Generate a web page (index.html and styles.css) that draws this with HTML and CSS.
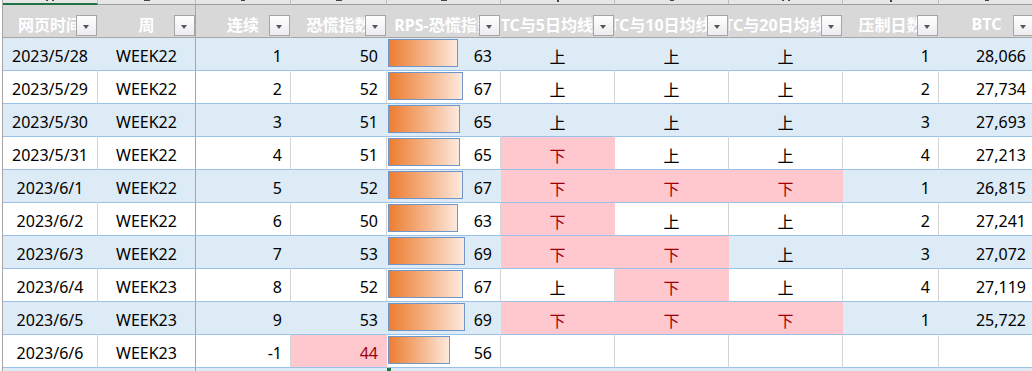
FILE: index.html
```html
<!DOCTYPE html>
<html lang="zh">
<head>
<meta charset="utf-8">
<title>Sheet</title>
<link rel="stylesheet" href="styles.css">
</head>
<body>
<div class="sheet">
  <div class="row strip">
    <div class="sc sel"><i class="mk m2"></i></div><div class="sc"><i class="mk"></i></div><div class="sc"><i class="mk m3"></i></div><div class="sc"><i class="mk"></i></div><div class="sc"><i class="mk"></i></div><div class="sc"><i class="mk m1"></i></div><div class="sc"><i class="mk m3"></i></div><div class="sc"><i class="mk m2"></i></div><div class="sc"><i class="mk m1"></i></div><div class="sc"><i class="mk m3"></i></div>
  </div>
  <div class="row head">
    <div class="hc"><span class="ht">网页时间</span><i class="fb"></i></div>
    <div class="hc frz"><span class="ht">周</span><i class="fb"></i></div>
    <div class="hc"><span class="ht">连续</span><i class="fb"></i></div>
    <div class="hc"><span class="ht">恐慌指数</span><i class="fb"></i></div>
    <div class="hc"><span class="ht">RPS-恐慌指数</span><i class="fb"></i></div>
    <div class="hc"><span class="ht">BTC与5日均线比较</span><i class="fb"></i></div>
    <div class="hc"><span class="ht">BTC与10日均线比较</span><i class="fb"></i></div>
    <div class="hc"><span class="ht">BTC与20日均线比较</span><i class="fb"></i></div>
    <div class="hc"><span class="ht">压制日数</span><i class="fb"></i></div>
    <div class="hc"><span class="ht">BTC</span><i class="fb"></i></div>
  </div>

  <div class="row band">
    <div class="c ctr">2023/5/28</div><div class="c ctr frz">WEEK22</div><div class="c num">1</div><div class="c num">50</div>
    <div class="c rps"><span class="bar" style="width:70px"></span><span class="rv">63</span></div>
    <div class="c ctr">上</div><div class="c ctr">上</div><div class="c ctr">上</div><div class="c num">1</div><div class="c num">28,066</div>
  </div>
  <div class="row">
    <div class="c ctr">2023/5/29</div><div class="c ctr frz">WEEK22</div><div class="c num">2</div><div class="c num">52</div>
    <div class="c rps"><span class="bar" style="width:75px"></span><span class="rv">67</span></div>
    <div class="c ctr">上</div><div class="c ctr">上</div><div class="c ctr">上</div><div class="c num">2</div><div class="c num">27,734</div>
  </div>
  <div class="row band">
    <div class="c ctr">2023/5/30</div><div class="c ctr frz">WEEK22</div><div class="c num">3</div><div class="c num">51</div>
    <div class="c rps"><span class="bar" style="width:72px"></span><span class="rv">65</span></div>
    <div class="c ctr">上</div><div class="c ctr">上</div><div class="c ctr">上</div><div class="c num">3</div><div class="c num">27,693</div>
  </div>
  <div class="row">
    <div class="c ctr">2023/5/31</div><div class="c ctr frz">WEEK22</div><div class="c num">4</div><div class="c num">51</div>
    <div class="c rps"><span class="bar" style="width:72px"></span><span class="rv">65</span></div>
    <div class="c ctr bad">下</div><div class="c ctr">上</div><div class="c ctr">上</div><div class="c num">4</div><div class="c num">27,213</div>
  </div>
  <div class="row band">
    <div class="c ctr">2023/6/1</div><div class="c ctr frz">WEEK22</div><div class="c num">5</div><div class="c num">52</div>
    <div class="c rps"><span class="bar" style="width:75px"></span><span class="rv">67</span></div>
    <div class="c ctr bad">下</div><div class="c ctr bad">下</div><div class="c ctr bad">下</div><div class="c num">1</div><div class="c num">26,815</div>
  </div>
  <div class="row">
    <div class="c ctr">2023/6/2</div><div class="c ctr frz">WEEK22</div><div class="c num">6</div><div class="c num">50</div>
    <div class="c rps"><span class="bar" style="width:70px"></span><span class="rv">63</span></div>
    <div class="c ctr bad">下</div><div class="c ctr">上</div><div class="c ctr">上</div><div class="c num">2</div><div class="c num">27,241</div>
  </div>
  <div class="row band">
    <div class="c ctr">2023/6/3</div><div class="c ctr frz">WEEK22</div><div class="c num">7</div><div class="c num">53</div>
    <div class="c rps"><span class="bar" style="width:77px"></span><span class="rv">69</span></div>
    <div class="c ctr bad">下</div><div class="c ctr bad">下</div><div class="c ctr">上</div><div class="c num">3</div><div class="c num">27,072</div>
  </div>
  <div class="row">
    <div class="c ctr">2023/6/4</div><div class="c ctr frz">WEEK23</div><div class="c num">8</div><div class="c num">52</div>
    <div class="c rps"><span class="bar" style="width:75px"></span><span class="rv">67</span></div>
    <div class="c ctr">上</div><div class="c ctr bad">下</div><div class="c ctr">上</div><div class="c num">4</div><div class="c num">27,119</div>
  </div>
  <div class="row band">
    <div class="c ctr">2023/6/5</div><div class="c ctr frz">WEEK23</div><div class="c num">9</div><div class="c num">53</div>
    <div class="c rps"><span class="bar" style="width:77px"></span><span class="rv">69</span></div>
    <div class="c ctr bad">下</div><div class="c ctr bad">下</div><div class="c ctr bad">下</div><div class="c num">1</div><div class="c num">25,722</div>
  </div>
  <div class="row">
    <div class="c ctr">2023/6/6</div><div class="c ctr frz">WEEK23</div><div class="c num">-1</div><div class="c num bad">44</div>
    <div class="c rps"><span class="bar" style="width:62px"></span><span class="rv">56</span></div>
    <div class="c ctr"></div><div class="c ctr"></div><div class="c ctr"></div><div class="c num"></div><div class="c num"></div>
  </div>
  <div class="row band last">
    <div class="c"></div><div class="c frz"></div><div class="c"></div><div class="c"></div><div class="c handle"></div><div class="c"></div><div class="c"></div><div class="c"></div><div class="c"></div><div class="c"></div>
  </div>
</div>
</body>
</html>
```

FILE: styles.css
```css
html, body {
  margin: 0;
  padding: 0;
  background: #ffffff;
  overflow: hidden;
}
body {
  width: 1032px;
  height: 371px;
  font-family: "Noto Sans", "Noto Sans CJK SC", sans-serif;
  font-size: 16px;
  color: #000;
}
.sheet {
  margin-left: 2px;
  border-left: 1px solid #a6a6a6;
  width: 1036px;
  height: 371px;
  overflow: hidden;
}
.row {
  display: grid;
  grid-template-columns: 95px 98px 95px 96px 114px 114px 114px 114px 96px 96px;
  height: 33px;
}
.strip {
  height: 5px;
}
.sc {
  box-sizing: border-box;
  height: 5px;
  background: #e6e6e6;
  border-right: 1px solid #bcbcbc;
  border-bottom: 1px solid #9e9e9e;
  display: flex;
  justify-content: center;
  align-items: flex-start;
}
.mk {
  display: block;
  width: 6px;
  height: 1px;
  background: #444;
}
.mk.m1 {
  width: 2px;
  height: 2px;
}
.mk.m2 {
  width: 8px;
  height: 1px;
  background: linear-gradient(to right, #444 2px, transparent 2px, transparent 6px, #444 6px);
}
.mk.m3 {
  width: 4px;
  height: 1px;
}
.sc.sel {
  border-bottom: 2px solid #217346;
}
.head {
  height: 33px;
}
.hc {
  position: relative;
  box-sizing: border-box;
  background: #d8d8d8;
  border-bottom: 1px solid #a6a6a6;
  border-right: 1px solid #d8d8d8;
  overflow: hidden;
  display: flex;
  justify-content: center;
  align-items: center;
  padding-top: 5px;
  white-space: nowrap;
}
.hc.frz {
  border-right-color: #a6a6a6;
}
.ht {
  color: #ffffff;
  font-weight: bold;
  flex-shrink: 0;
}
.fb {
  position: absolute;
  right: 0;
  top: 10px;
  width: 21px;
  height: 21px;
  box-sizing: border-box;
  border: 1px solid #a5a5a5;
  background: linear-gradient(#ffffff, #ececf0);
}
.fb::after {
  content: "";
  position: absolute;
  left: 6px;
  top: 9px;
  border-left: 3.5px solid transparent;
  border-right: 3.5px solid transparent;
  border-top: 4px solid #555;
}
.c {
  box-sizing: border-box;
  background: #ffffff;
  border-right: 1px solid #d4d4d4;
  border-bottom: 1px solid #9bc2e6;
  display: flex;
  align-items: center;
  padding-top: 3px;
  white-space: nowrap;
  overflow: hidden;
}
.band .c {
  background: #ddebf7;
  border-right-color: #ddebf7;
}
.c.frz, .band .c.frz {
  border-right-color: #a6a6a6;
}
.ctr {
  justify-content: center;
}
.num {
  justify-content: flex-end;
  padding-right: 8px;
}
.c.bad, .band .c.bad {
  background: #ffc7ce;
  border-right-color: #ffc7ce;
  color: #9c0006;
}
.rps {
  padding-right: 8px;
}
.bar {
  align-self: flex-start;
  margin-top: -2px;
  margin-left: 1px;
  height: 28px;
  box-sizing: border-box;
  border: 1px solid #6f95c9;
  background: linear-gradient(to right, #ed7d31, #f4b183 50%, #fde9dd);
  flex-shrink: 0;
}
.rv {
  margin-left: auto;
}
.handle {
  position: relative;
}
.handle::before {
  content: "";
  position: absolute;
  left: 0;
  top: 0;
  width: 4px;
  height: 3px;
  background: #217346;
}
```
